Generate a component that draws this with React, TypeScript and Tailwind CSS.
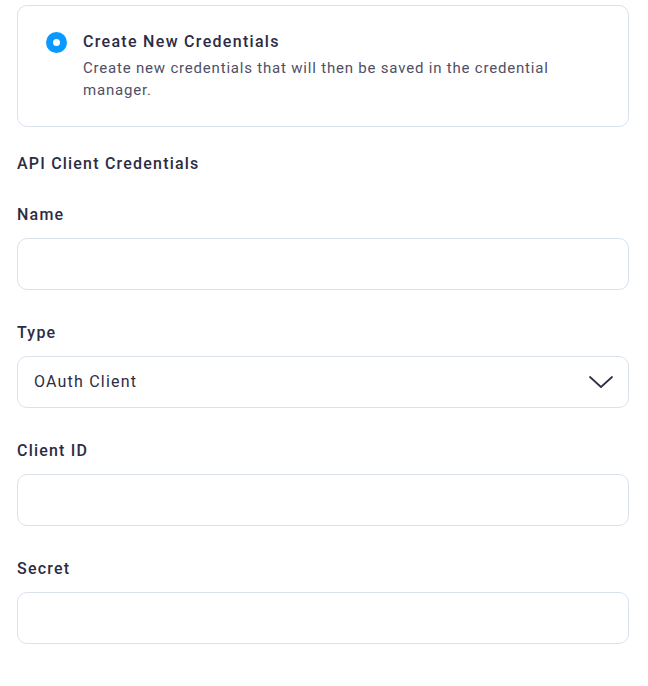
import React from "react";

function Field({ label, children }: { label: string; children?: React.ReactNode }) {
  return (
    <div className="mt-[31px]">
      <div className="text-[16px] leading-6 font-medium tracking-[1.2px] text-[#2c2c44] mb-[11px]">{label}</div>
      {children ?? (
        <input className="block w-full h-[52px] rounded-[10px] border border-[#d9e1ec] bg-white px-4 outline-none" />
      )}
    </div>
  );
}

export default function App() {
  return (
    <div
      className="min-h-screen bg-white pl-[17px] pr-[19px] pt-[5px]"
      style={{ fontFamily: "Roboto, 'Noto Sans', sans-serif" }}
    >
      <div className="rounded-[10px] border border-[#d9e1ec] pl-[28px] pr-6 pt-6 pb-[25px] flex items-start">
        <div className="mt-[2px] w-[21px] h-[21px] rounded-full border-[7px] border-[#0a99ff] bg-white shrink-0" />
        <div className="ml-[16px]">
          <div className="text-[16px] leading-6 font-medium tracking-[1.3px] text-[#2c2c44]">Create New Credentials</div>
          <div className="mt-[3px] text-[15px] leading-[22px] tracking-[0.8px] text-[#4f4f66]">
            Create new credentials that will then be saved in the credential manager.
          </div>
        </div>
      </div>

      <div className="mt-[25px] text-[16px] leading-6 font-medium tracking-[1.2px] text-[#2c2c44]">API Client Credentials</div>

      <div className="-mt-[4px]">
        <Field label="Name" />
      </div>
      <Field label="Type">
        <div className="flex items-center justify-between h-[52px] rounded-[10px] border border-[#d9e1ec] bg-white pl-4 pr-[15px]">
          <span className="text-[16px] tracking-[1.2px] text-[#2c2c44]">OAuth Client</span>
          <svg width="24" height="12" viewBox="0 0 24 12" fill="none">
            <path d="M1 1L12 11L23 1" stroke="#2c2c44" strokeWidth="1.7" strokeLinecap="round" strokeLinejoin="round" />
          </svg>
        </div>
      </Field>
      <Field label="Client ID" />
      <Field label="Secret" />
    </div>
  );
}
